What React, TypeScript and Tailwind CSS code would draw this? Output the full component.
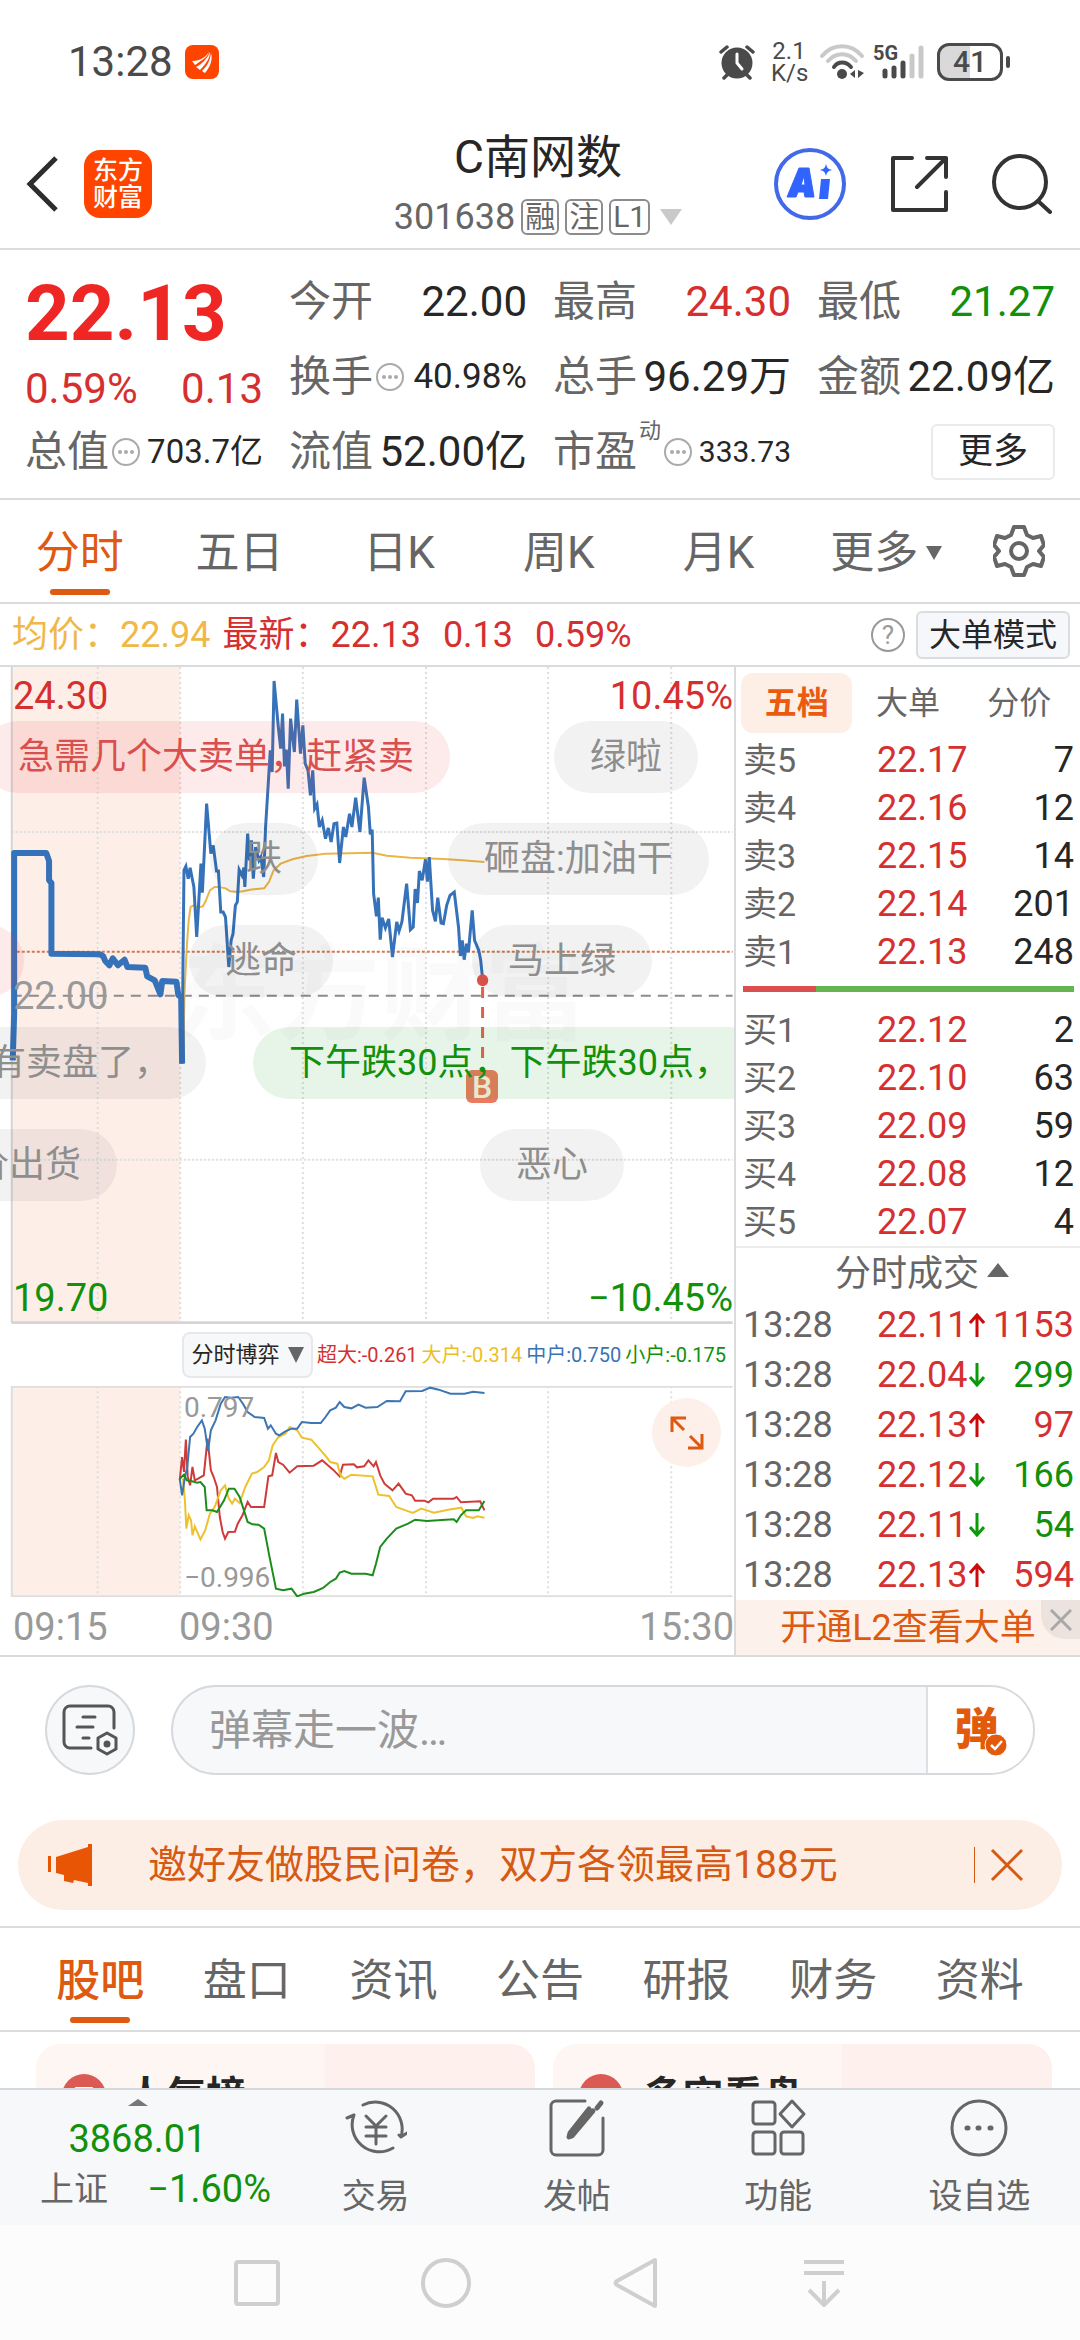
import type { ReactNode } from 'react'

const SELLS = [
  ['卖5', '22.17', '7'],
  ['卖4', '22.16', '12'],
  ['卖3', '22.15', '14'],
  ['卖2', '22.14', '201'],
  ['卖1', '22.13', '248'],
]

const BUYS = [
  ['买1', '22.12', '2'],
  ['买2', '22.10', '63'],
  ['买3', '22.09', '59'],
  ['买4', '22.08', '12'],
  ['买5', '22.07', '4'],
]

const TRADES = [
  { time: '13:28', price: '22.11', up: true, volume: '1153' },
  { time: '13:28', price: '22.04', up: false, volume: '299' },
  { time: '13:28', price: '22.13', up: true, volume: '97' },
  { time: '13:28', price: '22.12', up: false, volume: '166' },
  { time: '13:28', price: '22.11', up: false, volume: '54' },
  { time: '13:28', price: '22.13', up: true, volume: '594' },
]

const PRE_OPEN =
  '27,1200 30,1060 30,578 98,578 104,602 104,660 109,668 109,880 212,882 219,888 223,902 232,915 239,894 250,915 264,898 270,920 308,922 312,948 328,960 340,1002 344,962 374,964 378,1004 384,1010 386,1210'

const PRICE =
  '386,1210 388,900 390,630 394,618 399,655 403,622 411,680 417,830 426,610 429,697 438,430 447,580 452,555 459,632 463,632 468,755 473,755 478,770 485,920 490,840 494,820 499,735 503,725 507,628 513,645 517,622 519,680 525,520 529,600 533,540 537,655 542,560 549,600 553,590 559,650 563,500 573,270 577,335 581,62 590,200 595,265 599,160 603,318 607,268 611,385 616,175 624,275 629,118 637,280 642,195 647,310 653,330 658,405 663,330 667,445 672,432 677,500 683,480 690,535 696,503 702,545 708,490 714,488 720,608 728,500 733,530 741,460 746,500 754,412 763,515 772,352 781,440 785,522 789,508 792,700 798,768 802,712 806,838 810,772 817,803 824,776 832,890 841,785 846,812 852,785 862,670 870,808 876,800 880,686 885,728 889,632 895,660 902,597 906,664 910,590 917,750 923,783 928,712 935,788 940,790 947,735 954,705 963,695 972,800 976,887 980,840 984,898 989,850 993,875 1001,750 1006,840 1015,870 1019,900 1023,955'

const AVERAGE =
  '389,1180 391,1000 396,860 400,780 404,740 410,735 418,742 430,738 436,722 445,690 455,680 465,680 478,684 488,693 500,694 515,693 530,688 560,684 570,665 580,630 595,610 620,597 650,587 690,580 740,579 790,577 820,586 870,592 940,596 980,600 1027,605'

const FLOWS = [
  {
    name: '超大',
    value: '-0.261',
    text: 'text-[#d5302f]',
    stroke: '#cf3a3a',
    points:
      '381,480 386,410 390,455 394,358 398,470 403,495 408,440 413,480 420,475 432,465 440,355 447,450 453,470 460,500 466,590 472,635 477,655 484,635 498,634 504,610 514,585 525,545 532,560 560,560 569,468 577,465 585,398 590,425 600,433 614,457 630,438 665,436 683,420 695,435 706,448 720,468 727,433 750,432 757,441 772,438 781,420 792,438 797,425 806,465 815,490 832,510 845,490 860,520 873,525 880,541 900,541 908,546 918,535 962,535 968,530 977,546 1018,543 1027,570',
  },
  {
    name: '大户',
    value: '-0.314',
    text: 'text-[#edbe1e]',
    stroke: '#edc22e',
    points:
      '388,475 392,540 395,625 400,585 405,600 408,645 413,618 425,657 435,630 445,580 455,560 468,510 477,495 485,535 492,550 498,535 508,548 520,500 534,460 545,455 560,440 570,420 578,375 590,350 605,340 614,320 630,330 640,352 660,358 680,390 692,410 700,425 715,430 722,465 730,475 745,463 790,468 802,523 825,527 840,560 860,570 875,578 893,565 920,577 950,568 978,562 988,588 1003,593 1012,588 1027,592',
  },
  {
    name: '中户',
    value: '0.750',
    text: 'text-[#3a73b5]',
    stroke: '#3c76b4',
    points:
      '381,475 386,525 392,470 397,440 403,350 410,340 418,320 428,300 434,325 441,392 447,330 457,300 468,250 477,230 490,232 505,230 515,250 525,275 540,290 560,293 568,325 574,315 585,340 592,345 605,333 618,325 630,325 640,305 660,308 680,308 690,290 700,270 712,262 720,245 730,260 745,264 760,253 775,262 800,260 820,242 848,243 860,213 895,212 912,202 930,208 955,220 985,220 1003,214 1027,218',
  },
  {
    name: '小户',
    value: '-0.175',
    text: 'text-[#12900b]',
    stroke: '#1c8d1c',
    points:
      '381,475 390,463 396,480 405,482 418,487 425,485 434,500 438,570 450,570 460,575 475,540 485,505 497,505 508,530 525,605 535,612 548,613 560,625 570,700 585,805 600,810 618,805 630,828 645,820 665,815 685,803 700,785 712,775 720,757 730,752 745,760 775,760 790,765 797,730 806,680 820,655 840,625 865,610 880,598 905,602 945,598 962,597 968,605 977,585 988,570 1015,570 1027,542',
  },
]

const GRID_X = [207, 382, 642, 903, 1162, 1423]

const StatusBar = () => (
  <div className="flex h-[124px] items-center justify-between pl-[68px] pr-[70px] text-[#4a4a4a]">
    <div className="flex items-center gap-3">
      <span className="text-[42px] leading-none">13:28</span>
      <svg viewBox="0 0 34 34" className="size-[34px]">
        <rect width="34" height="34" rx="8" fill="#ff4400" />
        <path d="M7 16c7 0 13-3 17-9-1 3-3 5-4 6L10 20zM11 22c6-3 11-8 14-15 0 6-4 12-10 18zM17 26c5-5 8-10 9-18 2 7-1 14-6 20z" fill="#fff" />
      </svg>
    </div>
    <div className="flex items-center">
      <svg viewBox="0 0 36 36" className="mr-4 size-9">
        <circle cx="18" cy="19" r="15.500" fill="#4a4a4a" />
        <path d="M18 10v9l5 6" fill="none" stroke="#fff" strokeWidth="3" strokeLinecap="round" />
        <path d="M2 8l6-5M34 8l-6-5M8 31l-3 3M28 31l3 3" stroke="#4a4a4a" strokeWidth="3.500" strokeLinecap="round" />
      </svg>
      <div className="mr-3 w-9 text-center text-[24px] leading-[22px]">
        <div>2.1</div>
        <div>K/s</div>
      </div>
      <svg viewBox="0 0 46 36" className="mr-2 h-9 w-[46px]" fill="none" strokeWidth="4" strokeLinecap="round">
        <path d="M3 12c11-13 29-13 40 0M9 17c8-9 20-9 28 0" stroke="#c9c9c9" />
        <path d="M15 23c4-6 12-6 17 0" stroke="#4a4a4a" />
        <circle cx="23" cy="30" r="5" fill="#4a4a4a" />
        <path d="M36 26v8l-5-4zM39 26v8l6-5z" fill="#4a4a4a" />
      </svg>
      <div className="relative mr-3 h-9 w-[52px]">
        <svg viewBox="0 0 52 36" className="h-9 w-[52px]" strokeWidth="5" strokeLinecap="round">
          <path d="M12 27v5M21 24v8M30 19v13" stroke="#4a4a4a" />
          <path d="M39 12v20M48 4v28" stroke="#c9c9c9" />
        </svg>
        <span className="absolute left-0 top-0 text-[20px] font-bold leading-[18px]">5G</span>
      </div>
      <div className="flex h-[38px] w-[66px] items-center justify-center rounded-xl border-3 border-[#4a4a4a] bg-linear-to-r from-[#d9d9d9] from-50% to-white to-50% text-[30px] font-medium leading-none">
        41
      </div>
      <div className="ml-[3px] h-3 w-1 rounded bg-[#4a4a4a]" />
    </div>
  </div>
)

const Badge = ({ children }: { children: ReactNode }) => (
  <span className="flex h-9 min-w-9 items-center justify-center rounded-md border-2 border-[#8c8c8c] px-[2px] text-[30px] leading-none">
    {children}
  </span>
)

const Header = () => (
  <header className="grid h-[126px] grid-cols-3 items-center border-b-2 border-[#dadbdd] pb-2 pl-6 pr-7">
    <div className="flex items-center gap-6">
      <button aria-label="返回">
        <svg viewBox="0 0 36 56" className="h-14 w-9" fill="none" stroke="#2d2d2d" strokeWidth="5">
          <path d="M32 2L6 28l26 26" />
        </svg>
      </button>
      <a href="#home" className="flex size-[68px] flex-col items-center justify-center rounded-2xl bg-[#ff4400] text-[25px] font-medium leading-[27px] text-white">
        <span>东方</span>
        <span>财富</span>
      </a>
    </div>
    <div className="flex flex-col items-center">
      <h1 className="text-[46px] leading-[66px] text-[#262626]">C南网数</h1>
      <div className="flex items-center gap-[6px] text-[36px] leading-[54px] text-[#666]">
        <span>301638</span>
        <Badge>融</Badge>
        <Badge>注</Badge>
        <Badge>L1</Badge>
        <svg viewBox="0 0 22 16" className="ml-1 h-4 w-[22px]" fill="#c9c9c9">
          <path d="M0 0h22L11 16z" />
        </svg>
      </div>
    </div>
    <div className="flex items-center justify-end gap-11">
      <button aria-label="AI">
        <svg viewBox="0 0 72 72" className="size-[72px]">
          <circle cx="36" cy="36" r="34" fill="none" stroke="#4169e8" strokeWidth="4" />
          <path d="M25 20h10l5 29h-9l-1-5h-6l-2 5h-9zM27 37h4l-1-9z" fill="#3164ff" stroke="#3164ff" strokeWidth="1" strokeLinejoin="round" />
          <path d="M47 31h9l-2 20h-9zM52 16c1 4 2 5 6 6-4 1-5 2-6 6-1-4-2-5-6-6 4-1 5-2 6-6z" fill="#3164ff" />
        </svg>
      </button>
      <button aria-label="分享">
        <svg viewBox="0 0 58 58" className="size-[58px]" fill="none" stroke="#333" strokeWidth="4" strokeLinecap="round" strokeLinejoin="round">
          <path d="M22 3H3v52h53V37M37 3h19v19M56 3L27 32" />
        </svg>
      </button>
      <button aria-label="搜索">
        <svg viewBox="0 0 60 60" className="size-[60px]" fill="none" stroke="#333" strokeWidth="4" strokeLinecap="round">
          <circle cx="28" cy="28" r="26" />
          <path d="M46 47l12 11" />
        </svg>
      </button>
    </div>
  </header>
)

const Info = () => (
  <svg viewBox="0 0 30 30" className="size-[30px] shrink-0">
    <circle cx="15" cy="15" r="13" fill="none" stroke="#aaa" strokeWidth="2" />
    <g fill="#aaa">
      <circle cx="9" cy="15" r="2" />
      <circle cx="15" cy="15" r="2" />
      <circle cx="21" cy="15" r="2" />
    </g>
  </svg>
)

type StatProps = { label: string; value: string; info?: boolean; sup?: string; className?: string }

const Stat = ({ label, value, info, sup, className = 'text-[42px] text-[#262626]' }: StatProps) => (
  <div className="flex h-[75px] items-center whitespace-nowrap">
    <dt className="flex items-center gap-[2px] text-[42px] text-[#666]">
      {label}
      {sup && <sup className="self-start text-[22px] leading-10">{sup}</sup>}
      {info && <Info />}
    </dt>
    <dd className={'ml-auto ' + className}>{value}</dd>
  </div>
)

const Quote = () => (
  <section className="border-b-2 border-[#dadbdd] px-[25px] pb-[9px] pt-[14px]">
    <dl className="grid grid-cols-4 gap-x-[26px] leading-[60px]">
      <div className="row-span-2 flex flex-col text-[#d5302f]">
        <div className="flex h-[100px] items-center text-[78px] font-bold text-[#ee2624]">22.13</div>
        <div className="flex h-[50px] items-center justify-between text-[42px]">
          <span>0.59%</span>
          <span>0.13</span>
        </div>
      </div>
      <Stat label="今开" value="22.00" />
      <Stat label="最高" value="24.30" className="text-[42px] text-[#d5302f]" />
      <Stat label="最低" value="21.27" className="text-[42px] text-[#12900b]" />
      <Stat label="换手" value="40.98%" info className="text-[35px] text-[#262626]" />
      <Stat label="总手" value="96.29万" />
      <Stat label="金额" value="22.09亿" />
      <Stat label="总值" value="703.7亿" info className="text-[33px] text-[#262626]" />
      <Stat label="流值" value="52.00亿" />
      <Stat label="市盈" sup="动" value="333.73" info className="text-[30px] text-[#262626]" />
      <div className="flex items-center justify-end">
        <button className="h-14 w-[124px] rounded-md border-2 border-[#e8eaec] text-[35px] leading-none text-[#262626]">更多</button>
      </div>
    </dl>
  </section>
)

const PeriodTabs = () => (
  <nav className="flex h-[104px] border-b-2 border-[#dadbdd] text-[44px] text-[#666]">
    <div className="grid flex-1 grid-cols-6">
      {['分时', '五日', '日K', '周K', '月K', '更多'].map((tab, i) => (
        <button
          key={tab}
          className={
            'relative flex items-center justify-center gap-2 pt-1 ' + (i === 0 ? 'text-[#dd5a10]' : '') + (i === 5 ? 'pl-4' : '')
          }
        >
          {tab}
          {i === 0 && <span className="absolute bottom-[7px] h-[6px] w-[60px] rounded-full bg-[#dd5a10]" />}
          {i === 5 && (
            <svg viewBox="0 0 16 14" className="h-[14px] w-4" fill="#666">
              <path d="M0 0h16L8 14z" />
            </svg>
          )}
        </button>
      ))}
    </div>
    <button aria-label="设置" className="flex w-[122px] items-center justify-center">
      <svg viewBox="0 0 52 52" className="size-[52px]" fill="none" stroke="#666" strokeWidth="4" strokeLinejoin="round">
        <path d="M21 2h10l3 8 6 3 8-2 3 9-5 6 5 6-3 9-8-2-6 3-3 8H21l-3-8-6-3-8 2-3-9 5-6-5-6 3-9 8 2 6-3z" />
        <circle cx="26" cy="26" r="8" />
      </svg>
    </button>
  </nav>
)

const PriceLine = () => (
  <div className="flex h-[63px] items-center border-b-2 border-[#dadbdd] pl-3 pr-[10px] text-[36px]">
    <span className="text-[#f0b848]">均价：</span>
    <span className="mr-3 text-[#f0b848]">22.94</span>
    <div className="flex text-[#d5302f]">
      <span>最新：</span>
      <span className="mr-[22px]">22.13</span>
      <span className="mr-[22px]">0.13</span>
      <span>0.59%</span>
    </div>
    <button aria-label="帮助" className="ml-auto mr-[11px] flex size-[34px] items-center justify-center rounded-full border-2 border-[#999] text-[26px] leading-none text-[#999]">
      ?
    </button>
    <button className="h-12 rounded-md border-2 border-[#dadde0] bg-[#f5f7fa] px-[11px] text-[32px] leading-none text-[#262626]">大单模式</button>
  </div>
)

const GRAY = 'bg-black/5 text-[#8e8e8e]'

const BULLETS = [
  { text: '急需几个大卖单，赶紧卖', className: 'left-[-18px] top-[54px] bg-[#e83030]/10 text-[#d94f4f]' },
  { text: '绿啦', className: 'left-[554px] top-[54px] ' + GRAY },
  { text: '跌', className: 'left-[210px] top-[156px] ' + GRAY },
  { text: '砸盘:加油干', className: 'left-[448px] top-[156px] ' + GRAY },
  { text: '逃命', className: 'left-[189px] top-[258px] ' + GRAY },
  { text: '马上绿', className: 'left-[472px] top-[258px] ' + GRAY },
  { text: '有卖盘了，', className: 'left-[-46px] top-[360px] ' + GRAY },
  { text: '下午跌30点，下午跌30点，', className: 'left-[253px] top-[360px] bg-[#10a020]/10 text-[#12900b]' },
  { text: '价出货', className: 'left-[-63px] top-[462px] ' + GRAY },
  { text: '恶心', className: 'left-[480px] top-[462px] ' + GRAY },
]

const Gridlines = ({ y1, y2 }: { y1: number; y2: number }) => (
  <g stroke="#dedede" strokeWidth="2" strokeDasharray="2 3">
    {GRID_X.map((x) => (
      <line key={x} x1={x} x2={x} y1={y1} y2={y2} vectorEffect="non-scaling-stroke" />
    ))}
  </g>
)

const PriceChart = () => (
  <div className="relative h-[657px] overflow-hidden text-[38px] leading-[44px]">
    <div className="absolute left-[172px] top-[270px] text-[104px] font-bold leading-[120px] text-black/2">东方财富</div>
    <svg viewBox="0 20 1556 1971" preserveAspectRatio="none" className="absolute inset-0 size-full" fill="none">
      <rect x="25" y="20" width="357" height="1969" fill="#fdeee8" />
      <Gridlines y1={20} y2={1989} />
      <path d="M25 515H1553M25 1498H1553" stroke="#dedede" strokeWidth="2" strokeDasharray="2 2" vectorEffect="non-scaling-stroke" />
      <path d="M25 20V1989" stroke="#d5d5d5" strokeWidth="2" vectorEffect="non-scaling-stroke" />
      <path d="M25 1989H1553" stroke="#d5d5d5" strokeWidth="4" vectorEffect="non-scaling-stroke" />
      <path d="M25 874H1553" stroke="#d07a4e" strokeWidth="2" strokeDasharray="3 2" vectorEffect="non-scaling-stroke" />
      <path d="M25 1006H1553" stroke="#8c8c8c" strokeWidth="2" strokeDasharray="10 7" vectorEffect="non-scaling-stroke" />
      <polyline points={AVERAGE} stroke="#ecb548" strokeWidth="2" vectorEffect="non-scaling-stroke" />
      <polyline points={PRE_OPEN} stroke="#3672b9" strokeWidth="6" strokeLinejoin="round" vectorEffect="non-scaling-stroke" />
      <polyline points={PRICE} stroke="#3672b9" strokeWidth="3" vectorEffect="non-scaling-stroke" />
      <path d="M1023 980V1230" stroke="#e0604f" strokeWidth="3" strokeDasharray="11 9" vectorEffect="non-scaling-stroke" />
      <ellipse cx="1023" cy="960" rx="12" ry="18" fill="#e2574c" />
    </svg>
    <span className="absolute left-[13px] top-[7px] text-[#d5302f]">24.30</span>
    <span className="absolute right-[1px] top-[7px] text-[#d5302f]">10.45%</span>
    <span className="absolute left-[13px] top-[307px] text-[#999]">22.00</span>
    <span className="absolute bottom-[4px] left-[13px] text-[#12900b]">19.70</span>
    <span className="absolute bottom-[4px] right-[1px] text-[#12900b]">−10.45%</span>
    <span className="absolute left-[466px] top-[403px] flex h-[33px] w-8 items-center justify-center rounded-md bg-[#ec7a60] text-[32px] font-medium leading-none text-[#fff1e4]">
      B
    </span>
    {BULLETS.map((b) => (
      <span key={b.text} className={'absolute flex h-[72px] items-center whitespace-nowrap rounded-full px-9 text-[36px] ' + b.className}>
        {b.text}
      </span>
    ))}
    <span className="absolute left-[-48px] top-[258px] h-[72px] w-[72px] rounded-full bg-[#e83030]/10" />
  </div>
)

const FlowChart = () => (
  <>
    <div className="flex h-[62px] items-center gap-1 pl-[182px] text-[20px]">
      <button className="flex h-[46px] w-[131px] shrink-0 items-center justify-center gap-2 rounded-lg border-2 border-[#e6e8eb] bg-[#f6f8fa] text-[22px] leading-none text-[#262626]">
        分时博弈
        <svg viewBox="0 0 16 16" className="size-4" fill="#666">
          <path d="M0 0h16L8 16z" />
        </svg>
      </button>
      {FLOWS.map((f) => (
        <span key={f.name} className={'whitespace-nowrap ' + f.text}>
          {f.name}:{f.value}
        </span>
      ))}
    </div>
    <div className="relative h-[211px] text-[28px] leading-8 text-[#999]">
      <svg viewBox="0 197 1556 633" preserveAspectRatio="none" className="absolute inset-0 size-full" fill="none">
        <rect x="25" y="198" width="357" height="630" fill="#fdeee8" />
        <Gridlines y1={198} y2={828} />
        <path d="M1553 199H25V828H1553" stroke="#dedede" strokeWidth="2" vectorEffect="non-scaling-stroke" />
        {FLOWS.map((f) => (
          <polyline key={f.name} points={f.points} stroke={f.stroke} strokeWidth="2" vectorEffect="non-scaling-stroke" />
        ))}
      </svg>
      <span className="absolute left-[184px] top-[6px]">0.797</span>
      <span className="absolute bottom-[3px] left-[184px]">−0.996</span>
      <button aria-label="全屏" className="absolute right-[13px] top-[12px] flex size-[69px] items-center justify-center rounded-full bg-[#fdf0ea]">
        <svg viewBox="0 0 34 34" className="size-[34px]" fill="none" stroke="#dd5a10" strokeWidth="3">
          <path d="M2 16V2h14M2 2l12 12M32 18v14H18M32 32L20 20" />
        </svg>
      </button>
    </div>
    <div className="flex h-[58px] items-center pl-[13px] pt-[2px] text-[38px] text-[#999]">
      <span className="w-[166px]">09:15</span>
      <span>09:30</span>
      <span className="ml-auto">15:30</span>
    </div>
  </>
)

const Book = ({ rows }: { rows: string[][] }) => (
  <table className="w-full table-fixed text-[36px] leading-none">
    <tbody>
      {rows.map(([label, price, qty]) => (
        <tr key={label} className="h-12">
          <th scope="row" className="w-[134px] text-left text-[34px] font-normal text-[#666]">{label}</th>
          <td className="text-[#d5302f]">{price}</td>
          <td className="w-[90px] text-right text-[#262626]">{qty}</td>
        </tr>
      ))}
    </tbody>
  </table>
)

const Arrow = ({ up }: { up: boolean }) => (
  <svg viewBox="0 0 16 24" className="h-6 w-4" fill="none" stroke={up ? '#cc0a0a' : '#0a9a0a'} strokeWidth="3">
    <path d={up ? 'M8 24V3M1 10l7-8 7 8' : 'M8 0v21M1 14l7 8 7-8'} />
  </svg>
)

const OrderPanel = () => (
  <aside className="flex w-[346px] shrink-0 flex-col border-l-2 border-[#dadbdd]">
    <div className="grid h-[69px] grid-cols-3 px-[5px] pt-[6px] text-[32px] text-[#666]">
      <button className="h-[60px] rounded-xl bg-[#fdeee6] font-bold text-[#ea5a10]">五档</button>
      <button className="h-[60px]">大单</button>
      <button className="h-[60px]">分价</button>
    </div>
    <div className="pl-[7px] pr-[6px]">
      <Book rows={SELLS} />
      <div className="mb-[14px] mt-[10px] flex h-[6px] bg-[#64b54f]">
        <div className="w-[22%] bg-[#d9504f]" />
      </div>
      <Book rows={BUYS} />
    </div>
    <button className="flex h-[54px] items-center justify-center gap-2 border-t-2 border-[#ececec] pl-7 text-[36px] text-[#666]">
      分时成交
      <svg viewBox="0 0 22 14" className="mb-2 h-[14px] w-[22px]" fill="#666">
        <path d="M0 14h22L11 0z" />
      </svg>
    </button>
    <table className="ml-[7px] mr-[6px] table-fixed text-[36px] leading-none">
      <tbody>
        {TRADES.map((t, i) => (
          <tr key={i} className="h-[50px]">
            <td className="w-[134px] text-[#666]">{t.time}</td>
            <td className="w-[92px] text-[#d5302f]">{t.price}</td>
            <td>
              <Arrow up={t.up} />
            </td>
            <td className={'w-[86px] text-right ' + (t.up ? 'text-[#d5302f]' : 'text-[#12900b]')}>{t.volume}</td>
          </tr>
        ))}
      </tbody>
    </table>
    <div className="relative flex flex-1 items-center justify-center bg-[#fdf1eb] text-[36px] leading-none">
      <a href="#l2" className="text-[#dd5a10]">开通L2查看大单</a>
      <button aria-label="关闭" className="absolute right-0 top-0 flex h-[39px] w-[39px] items-center justify-center rounded-bl-3xl bg-[#ede3de]">
        <svg viewBox="0 0 22 22" className="size-[22px]" stroke="#a8a8a8" strokeWidth="3">
          <path d="M1 1l20 20M21 1L1 21" />
        </svg>
      </button>
    </div>
  </aside>
)

const CommentBar = () => (
  <div className="flex h-[146px] items-center gap-9 px-[45px]">
    <button aria-label="弹幕设置" className="flex size-[90px] items-center justify-center rounded-full border-2 border-[#d6d9dd] bg-[#f6f8fa]">
      <svg viewBox="0 0 56 52" className="h-[52px] w-14" fill="none" stroke="#555" strokeWidth="3" strokeLinecap="round" strokeLinejoin="round">
        <path d="M29 44H8a6 6 0 0 1-6-6V8a6 6 0 0 1 6-6h38a6 6 0 0 1 6 6v16M21 13h12M15 23h16M21 34h6" />
        <path d="M45 29l9 5v11l-9 5-9-5V34z" />
        <circle cx="45" cy="40" r="2" fill="#555" />
      </svg>
    </button>
    <form className="flex h-[90px] flex-1 overflow-hidden rounded-full border-2 border-[#d6d9dd] bg-[#f6f8fa]">
      <input
        aria-label="弹幕"
        placeholder="弹幕走一波…"
        className="min-w-0 flex-1 pl-9 text-[42px] text-[#262626] outline-none placeholder:text-[#999]"
      />
      <button type="button" className="relative w-[107px] border-l-2 border-[#dcdfe3] bg-white pr-2 text-[44px] font-black leading-none text-[#e25a0c]">
        弹
        <svg viewBox="0 0 24 24" className="absolute bottom-4 right-[25px] size-6">
          <circle cx="12" cy="12" r="11" fill="#e25a0c" stroke="#fff" strokeWidth="1" />
          <path d="M7 12l4 4 7-8" fill="none" stroke="#fff" strokeWidth="2.500" />
        </svg>
      </button>
    </form>
  </div>
)

const Banner = () => (
  <div className="mx-[18px] mb-4 mt-[17px] flex h-[90px] items-center rounded-full bg-[#fdeee5] pl-7 pr-[38px] text-[#d55a14]">
    <svg viewBox="0 0 46 42" className="h-[42px] w-[46px]" fill="#e85504">
      <path d="M2 12h3v16H2zM10 13L42 3V0h4v42h-4v-3l-14-3-1 3-9-2v-6l-8-2z" />
    </svg>
    <a href="#survey" className="ml-14 text-[39px]">邀好友做股民问卷，双方各领最高188元</a>
    <span className="ml-auto mr-[15px] h-9 w-px bg-[#d55a14]" />
    <button aria-label="关闭">
      <svg viewBox="0 0 34 34" className="size-[34px]" stroke="#d55a14" strokeWidth="3">
        <path d="M2 2l30 30M32 2L2 32" />
      </svg>
    </button>
  </div>
)

const SectionTabs = () => (
  <nav className="flex h-[106px] border-y-2 border-[#dadbdd] px-[27px] text-[44px] text-[#666]">
    {['股吧', '盘口', '资讯', '公告', '研报', '财务', '资料'].map((tab, i) => (
      <button key={tab} className={'relative flex flex-1 items-center justify-center pt-1 ' + (i === 0 ? 'font-medium text-[#dd5a10]' : '')}>
        {tab}
        {i === 0 && <span className="absolute bottom-[7px] h-[6px] w-[60px] rounded-full bg-[#dd5a10]" />}
      </button>
    ))}
  </nav>
)

const Cards = () => (
  <div className="grid h-14 grid-cols-2 gap-[18px] overflow-hidden pl-9 pr-7 pt-3">
    {[
      { title: '人气榜', mark: '▤', more: true },
      { title: '多空看盘', mark: 'VS', more: false },
    ].map((card) => (
      <div
        key={card.title}
        className="flex h-[120px] items-start rounded-3xl bg-linear-to-r from-[#fef6f3] from-58% to-[#fdf0ed] to-58% pl-[26px] pt-[22px]"
      >
        <span className="mt-2 flex size-11 items-center justify-center rounded-full bg-[#dc5a54] text-[22px] font-bold text-white">{card.mark}</span>
        <h2 className="ml-5 text-[40px] font-bold leading-[62px] text-[#262626]">{card.title}</h2>
        {card.more && <span className="ml-3 text-[40px] leading-[58px] text-[#999]">›</span>}
      </div>
    ))}
  </div>
)

const ACTIONS = [
  {
    label: '交易',
    icon: (
      <>
        <path d="M18 7a27 27 0 0 1 38 32l6-4M48 50A27 27 0 0 1 9 17l-7 3M56 39l-2-2" />
        <path d="M21 18l10 10 10-10M31 28v18M21 29h20M21 38h20" />
      </>
    ),
  },
  {
    label: '发帖',
    icon: (
      <>
        <path d="M39 3H10a5 5 0 0 0-5 5v44a5 5 0 0 0 5 5h42a5 5 0 0 0 5-5V20" />
        <path d="M55 5L51 10M47 13L26 38l-3 1 1-4L43 11" strokeWidth="5" />
      </>
    ),
  },
  {
    label: '功能',
    icon: (
      <>
        <rect x="6" y="4" width="22" height="22" rx="3" />
        <rect x="6" y="34" width="22" height="22" rx="3" />
        <rect x="34" y="34" width="22" height="22" rx="3" />
        <path d="M45 3l12 13-12 13-12-13z" />
      </>
    ),
  },
  {
    label: '设自选',
    icon: (
      <>
        <circle cx="31" cy="30" r="27" />
        <path d="M19 30h1M30 30h1M42 30h1" strokeWidth="5" />
      </>
    ),
  },
]

const BottomBar = () => (
  <footer className="flex h-[137px] border-t-2 border-[#d6d9dd] bg-[#f6f8fa] text-[34px] text-[#666]">
    <a href="#index" className="flex w-[275px] flex-col items-center pt-[9px] text-[38px] text-[#12900b]">
      <svg viewBox="0 0 20 7" className="h-[7px] w-5" fill="#777">
        <path d="M0 7h20L10 0z" />
      </svg>
      <span className="mt-[10px] leading-[46px]">3868.01</span>
      <span className="mt-1 flex w-full items-center justify-between pl-10 pr-1 leading-[46px]">
        <span className="text-[34px] text-[#666]">上证</span>
        <span>−1.60%</span>
      </span>
    </a>
    {ACTIONS.map((a) => (
      <button key={a.label} className="flex flex-1 flex-col items-center pt-2">
        <svg viewBox="0 0 62 60" className="h-[60px] w-[62px]" fill="none" stroke="#666" strokeWidth="3" strokeLinecap="round" strokeLinejoin="round">
          {a.icon}
        </svg>
        <span className="mt-[14px] leading-[48px]">{a.label}</span>
      </button>
    ))}
  </footer>
)

const SystemNav = () => (
  <div className="grid h-[115px] grid-cols-4 bg-[#fcfcfc] px-[162px]">
    {[
      <rect x="5" y="6" width="42" height="42" rx="2" />,
      <circle cx="26" cy="27" r="23" />,
      <path d="M46 4v46L8 29q-3-2 0-4z" />,
      <path d="M6 6h40M6 17h40M26 25v24M11 34l15 15 15-15" />,
    ].map((shape, i) => (
      <button key={i} aria-label="系统导航" className="flex items-center justify-center">
        <svg viewBox="0 0 52 54" className="h-[54px] w-[52px]" fill="none" stroke="#cfcfcf" strokeWidth="4" strokeLinejoin="round">
          {shape}
        </svg>
      </button>
    ))}
  </div>
)

const App = () => {
  return (
    <div className="min-h-screen overflow-hidden bg-white font-['Roboto','Noto_Sans_CJK_SC',sans-serif]">
      <StatusBar />
      <Header />
      <Quote />
      <PeriodTabs />
      <PriceLine />
      <main className="flex border-b-2 border-[#dadbdd]">
        <div className="min-w-0 flex-1">
          <PriceChart />
          <FlowChart />
        </div>
        <OrderPanel />
      </main>
      <CommentBar />
      <Banner />
      <SectionTabs />
      <Cards />
      <BottomBar />
      <SystemNav />
    </div>
  )
}

export default App
